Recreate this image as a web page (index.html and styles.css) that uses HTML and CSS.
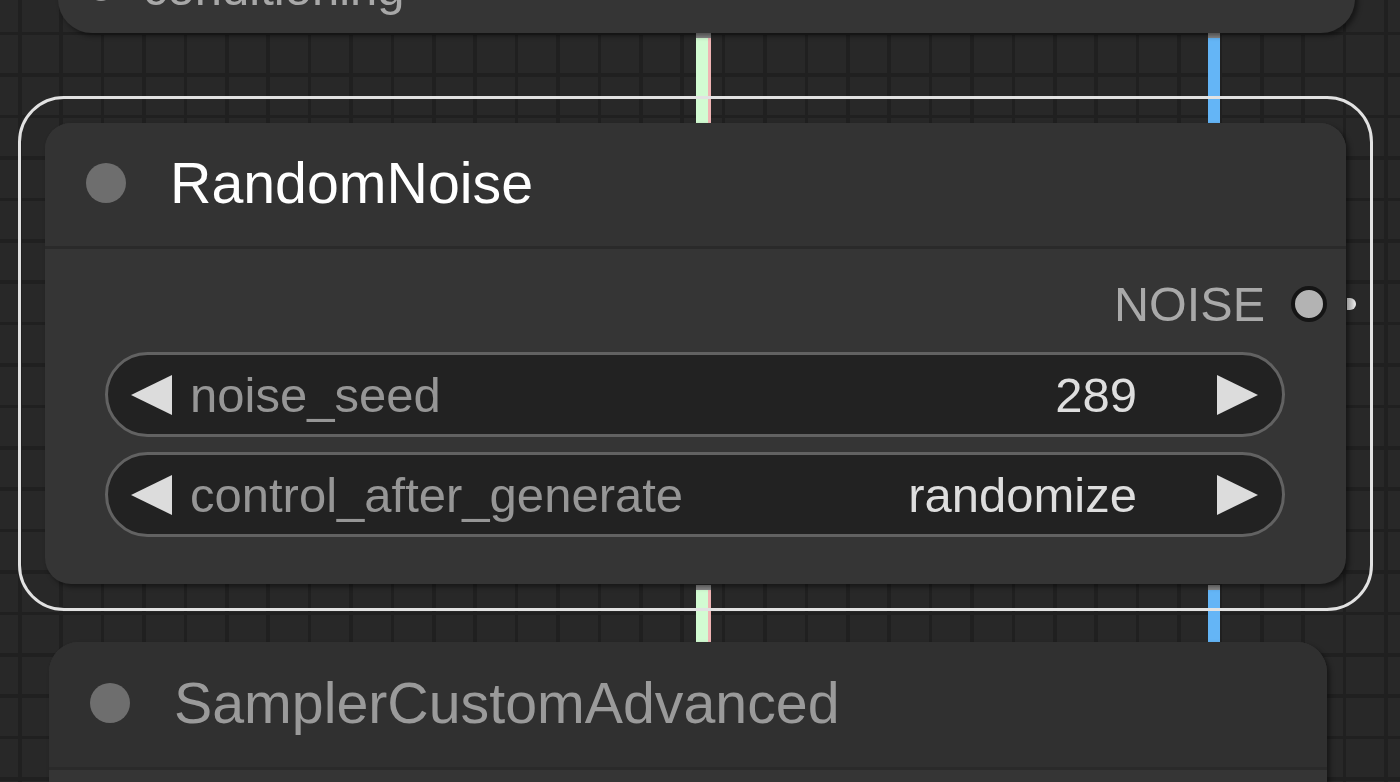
FILE: index.html
```html
<!DOCTYPE html>
<html>
<head>
<meta charset="utf-8">
<link rel="stylesheet" href="styles.css">
</head>
<body>
<div class="canvas">
  <div class="link link-green link-a"></div>
  <div class="link link-green link-b"></div>
  <div class="link link-blue link-c"></div>
  <div class="link link-blue link-d"></div>

  <div class="node node-top">
    <div class="slot-row">
      <span class="slot-dot"></span>
      <span class="slot-label">conditioning</span>
    </div>
  </div>

  <div class="node node-main">
    <div class="title-bar">
      <span class="title-dot"></span>
      <span class="title-text">RandomNoise</span>
    </div>
    <div class="node-body">
      <div class="output-row">
        <span class="output-label">NOISE</span>
        <span class="output-dot"></span>
      </div>
      <div class="widget">
        <svg class="arrow" viewBox="0 0 41 40"><polygon points="0,20 41,0 41,40" /></svg>
        <span class="w-label">noise_seed</span>
        <span class="w-value">289</span>
        <svg class="arrow arrow-r" viewBox="0 0 41 40"><polygon points="41,20 0,0 0,40" /></svg>
      </div>
      <div class="widget">
        <svg class="arrow" viewBox="0 0 41 40"><polygon points="0,20 41,0 41,40" /></svg>
        <span class="w-label">control_after_generate</span>
        <span class="w-value">randomize</span>
        <svg class="arrow arrow-r" viewBox="0 0 41 40"><polygon points="41,20 0,0 0,40" /></svg>
      </div>
    </div>
  </div>

  <div class="link-stub"></div>
  <div class="selection"></div>

  <div class="node node-bottom">
    <div class="title-bar title-bar-dim">
      <span class="title-dot"></span>
      <span class="title-text title-text-dim">SamplerCustomAdvanced</span>
    </div>
    <div class="node-body-dim"></div>
  </div>
</div>
</body>
</html>
```

FILE: styles.css
```css
* { box-sizing: border-box; }
html, body {
  margin: 0;
  padding: 0;
  width: 1400px;
  height: 782px;
  overflow: hidden;
  background: #282828;
  font-family: "Liberation Sans", Arial, sans-serif;
}
.canvas {
  position: relative;
  width: 1400px;
  height: 782px;
  overflow: hidden;
  background-color: #282828;
  background-image:
    repeating-linear-gradient(to right, transparent 0, transparent 18px, #202020 18px, #202020 21.5px, transparent 21.5px, transparent 41.4px),
    repeating-linear-gradient(to bottom, transparent 0, transparent 32px, #202020 32px, #202020 35.5px, transparent 35.5px, transparent 41.4px);
}

/* links */
.link { position: absolute; }
.link-green {
  left: 696px;
  width: 15px;
  background:
    linear-gradient(to bottom, #8a8a8a 0, #8a8a8a 5px, transparent 5px),
    linear-gradient(to right, #d2fbd2 0, #d2fbd2 12px, #f0b4b4 12px, #f0b4b4 15px);
}
.link-blue {
  left: 1208px;
  width: 12px;
  background:
    linear-gradient(to bottom, #8a8a8a 0, #8a8a8a 5px, transparent 5px),
    #64b5f6;
}
.link-a, .link-c { top: 33px; height: 92px; }
.link-b, .link-d { top: 585px; height: 59px; }

/* nodes */
.node {
  position: absolute;
  background: #353535;
  box-shadow: 3px 3px 5px rgba(0, 0, 0, 0.45);
}
.node-top {
  left: 58px;
  top: -60px;
  width: 1297px;
  height: 93px;
  border-radius: 0 0 34px 34px;
  display: flex;
  flex-direction: column;
  justify-content: flex-end;
  padding: 0 0 17px 30px;
}
.slot-row {
  display: flex;
  align-items: center;
  height: 56px;
  gap: 29px;
}
.slot-dot {
  width: 26px;
  height: 26px;
  border-radius: 50%;
  background: #9a9a9a;
}
.slot-label {
  font-size: 49px;
  line-height: 56px;
  color: #a8a8a8;
}

.node-main {
  left: 45px;
  top: 123px;
  width: 1301px;
  border-radius: 26px;
  display: flex;
  flex-direction: column;
}
.title-bar {
  height: 126px;
  display: flex;
  align-items: center;
  padding-left: 41px;
  padding-bottom: 3px;
  gap: 44px;
  background: #333333;
  border-radius: 26px 26px 0 0;
  border-bottom: 3px solid #2a2a2a;
}
.title-dot {
  width: 40px;
  height: 40px;
  border-radius: 50%;
  background: #6e6e6e;
  flex: none;
}
.title-text {
  font-size: 57.3px;
  color: #ffffff;
  white-space: nowrap;
}
.node-body {
  padding: 30px 61px 47px 60px;
  display: flex;
  flex-direction: column;
}
.output-row {
  height: 50px;
  margin-bottom: 23px;
  margin-right: -42px;
  display: flex;
  align-items: center;
  justify-content: flex-end;
  gap: 26px;
}
.output-label {
  font-size: 48.5px;
  color: #a9a9a9;
  line-height: 50px;
}
.output-dot {
  width: 36px;
  height: 36px;
  border-radius: 50%;
  background: #b3b3b3;
  border: 4px solid #151515;
}
.widget {
  height: 85px;
  border: 3px solid #626262;
  border-radius: 43px;
  background: #222222;
  display: flex;
  align-items: center;
  padding: 0 24px 0 23px;
  font-size: 49px;
  white-space: nowrap;
}
.widget + .widget { margin-top: 15px; }
.arrow {
  width: 41px;
  height: 40px;
  flex: none;
  fill: #dcdcdc;
}
.w-label {
  margin-left: 18px;
  color: #969696;
  flex: 1;
}
.w-value {
  color: #dedede;
  margin-right: 80px;
}

.link-stub {
  position: absolute;
  left: 1347px;
  top: 298px;
  width: 9px;
  height: 12px;
  border-radius: 0 6px 6px 0;
  background: linear-gradient(to right, #9a9a9a, #f2f2f2);
}
.selection {
  position: absolute;
  left: 18px;
  top: 96px;
  width: 1355px;
  height: 515px;
  border: 3px solid #e2e2e2;
  border-radius: 46px;
}

.node-bottom {
  left: 49px;
  top: 642px;
  width: 1278px;
  height: 220px;
  border-radius: 30px 30px 0 0;
  display: flex;
  flex-direction: column;
}
.title-bar-dim {
  background: #303030;
  border-radius: 30px 30px 0 0;
  height: 128px;
  padding-left: 41px;
  gap: 44px;
}
.title-text-dim { color: #9a9a9a; }
.node-body-dim {
  flex: 1;
  background: #353535;
}
```
